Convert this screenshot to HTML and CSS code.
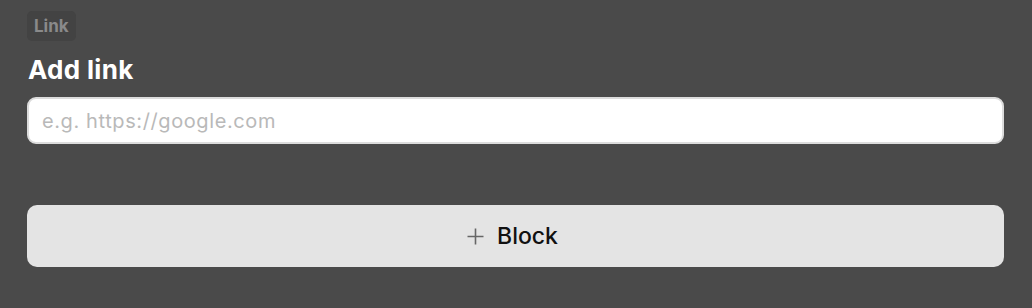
FILE: index.html
```html
<!DOCTYPE html>
<html lang="en">
<head>
    <meta charset="UTF-8">
    <meta name="viewport" content="width=device-width, initial-scale=1.0">
    <title>Link block</title>
    <link rel="stylesheet" href="styles.css">
</head>
<body>
    <div class="panel">
        <span class="tag">Link</span>
        <h2 class="title">Add link</h2>
        <input type="text" class="link-input" placeholder="e.g. https://google.com">
        <button class="add-button">
            <svg class="plus" width="17" height="17" viewBox="0 0 17 17">
                <path d="M8.5 0.5v16M0.5 8.5h16" stroke="#666" stroke-width="1.6" fill="none"/>
            </svg>
            Block
        </button>
    </div>
</body>
</html>
```

FILE: styles.css
```css
body {
    margin: 0;
    background-color: #4a4a4a;
    font-family: 'Inter', 'Noto Sans', sans-serif;
    overflow: hidden;
}

.panel {
    display: flex;
    flex-direction: column;
    align-items: flex-start;
    padding: 11px 28px 0 27px;
}

.tag {
    display: inline-block;
    background-color: #434343;
    color: #8a8a8a;
    font-size: 17px;
    font-weight: 700;
    line-height: 30px;
    height: 30px;
    padding: 0 7px;
    border-radius: 5px;
}

.title {
    margin: 13px 0 0 1px;
    font-size: 26px;
    font-weight: 700;
    letter-spacing: 0.3px;
    line-height: 31px;
    color: #fff;
}

.link-input {
    box-sizing: border-box;
    width: 100%;
    height: 47px;
    margin-top: 12px;
    padding: 0 13px;
    border: 2px solid #dcdcdc;
    border-radius: 9px;
    background: #fff;
    font-family: inherit;
    font-size: 20px;
    letter-spacing: 0.6px;
    color: #333;
    outline: none;
}

.link-input::placeholder {
    color: #b9b9b9;
}

.add-button {
    box-sizing: border-box;
    width: 100%;
    height: 62px;
    margin-top: 61px;
    padding: 0 6px 0 0;
    border: none;
    border-radius: 10px;
    background-color: #e4e4e4;
    font-family: inherit;
    font-size: 23px;
    font-weight: 500;
    color: #111;
    display: flex;
    align-items: center;
    justify-content: center;
    gap: 13px;
    cursor: pointer;
}
```
